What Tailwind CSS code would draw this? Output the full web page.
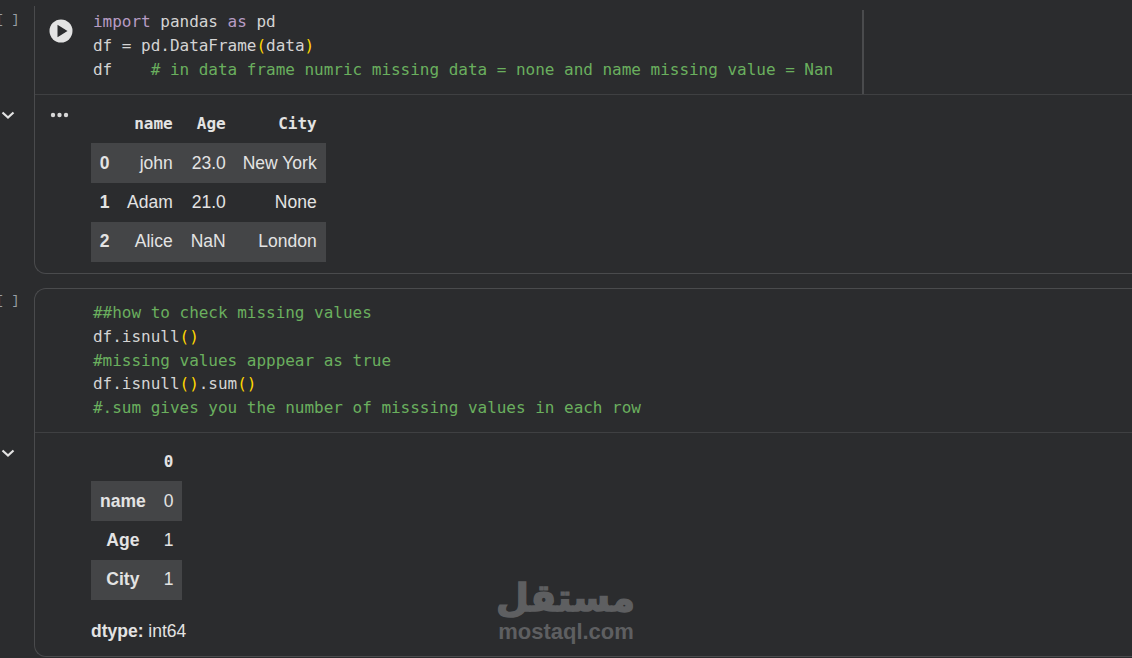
<!DOCTYPE html>
<html>
<head>
<meta charset="utf-8">
<script src="https://cdn.jsdelivr.net/npm/@tailwindcss/browser@4"></script>
</head>
<body class="bg-[#2b2c2e] overflow-hidden">
<div class="relative w-[1132px] h-[658px] overflow-hidden pt-[6px] text-[#e3e3e3] font-['Liberation_Sans',sans-serif]">

  <!-- first cell -->
  <div class="flex h-[268px]">
    <div class="w-[34px] shrink-0 flex flex-col">
      <div class="h-[88px] pt-[6px] ml-[-4px] font-['Liberation_Mono',monospace] text-[13px] leading-[16px] text-[#9aa0a6] whitespace-pre">[ ]</div>
      <svg class="ml-[1px] mt-[14px]" width="14" height="14" viewBox="0 0 14 14" fill="none" stroke="#e3e3e3" stroke-width="2.2"><path d="M1.5 4.5 7 9.5 12.5 4.5"/></svg>
    </div>
    <div class="flex-1 border-l border-b border-[#4a4b4d] rounded-bl-[12px] flex flex-col">
      <div class="h-[89px] border-b border-[#3f4042] flex">
        <div class="w-[58px] shrink-0 pt-[13px] pl-[14px]">
          <svg width="24" height="24" viewBox="0 0 24 24"><circle cx="12" cy="12" r="11.5" fill="#e3e3e3"/><path d="M8.5 5.8 18.5 12 8.5 18.2Z" fill="#2b2c2e"/></svg>
        </div>
        <div class="w-[771px] h-[84px] mt-[4px] border-r-2 border-[#4a4b4d] font-['DejaVu_Sans_Mono',monospace] text-[16px] leading-[24px] text-[#d4d4d4] whitespace-pre tracking-[-0.02px]"><div><span class="text-[#b79cc4]">import</span> pandas <span class="text-[#b79cc4]">as</span> pd</div><div>df = pd.DataFrame<span class="text-[#ffd700]">(</span>data<span class="text-[#ffd700]">)</span></div><div>df    <span class="text-[#6aaf5e]"># in data frame numric missing data = none and name missing value = Nan</span></div></div>
      </div>
      <div class="flex pt-[9px]">
        <div class="w-[56px] shrink-0 pl-[15px] pt-[1px]">
          <svg width="19" height="20" viewBox="0 0 19 20" fill="#d8d8d8"><circle cx="3" cy="10" r="2.2"/><circle cx="9.5" cy="10" r="2.2"/><circle cx="16" cy="10" r="2.2"/></svg>
        </div>
        <table class="text-[17.5px] leading-[21px] text-right border-collapse">
          <thead class="font-['DejaVu_Sans_Mono',monospace] text-[16px] font-bold">
            <tr class="h-[39px]"><th class="px-[8px] w-[27px]"></th><th class="px-[9px]">name</th><th class="px-[9px]">Age</th><th class="pl-[8px] pr-[9px]">City</th></tr>
          </thead>
          <tbody>
            <tr class="h-[40px] bg-[#444547]"><th class="px-[8px] text-center">0</th><td class="px-[9px]">john</td><td class="px-[9px]">23.0</td><td class="pl-[8px] pr-[9px]">New York</td></tr>
            <tr class="h-[39px]"><th class="px-[8px] text-center">1</th><td class="px-[9px]">Adam</td><td class="px-[9px]">21.0</td><td class="pl-[8px] pr-[9px]">None</td></tr>
            <tr class="h-[40px] bg-[#444547]"><th class="px-[8px] pb-[2px] text-center">2</th><td class="px-[9px] pb-[2px]">Alice</td><td class="px-[9px] pb-[2px]">NaN</td><td class="pl-[8px] pr-[9px] pb-[2px]">London</td></tr>
          </tbody>
        </table>
      </div>
    </div>
  </div>

  <!-- second cell -->
  <div class="flex h-[369px] mt-[14px]">
    <div class="w-[34px] shrink-0 flex flex-col">
      <div class="h-[145px] pt-[5px] ml-[-4px] font-['Liberation_Mono',monospace] text-[13px] leading-[16px] text-[#9aa0a6] whitespace-pre">[ ]</div>
      <svg class="ml-[1px] mt-[13px]" width="14" height="14" viewBox="0 0 14 14" fill="none" stroke="#e3e3e3" stroke-width="2.2"><path d="M1.5 4.5 7 9.5 12.5 4.5"/></svg>
    </div>
    <div class="flex-1 border border-r-0 border-[#4a4b4d] rounded-l-[12px] flex flex-col">
      <div class="h-[144px] border-b border-[#3f4042] pl-[58px] pt-[12px] font-['DejaVu_Sans_Mono',monospace] text-[16px] leading-[23.8px] text-[#d4d4d4] whitespace-pre tracking-[-0.02px]"><div class="text-[#6aaf5e]">##how to check missing values</div><div>df.isnull<span class="text-[#ffd700]">()</span></div><div class="text-[#6aaf5e]">#missing values apppear as true</div><div>df.isnull<span class="text-[#ffd700]">()</span>.sum<span class="text-[#ffd700]">()</span></div><div class="text-[#6aaf5e]">#.sum gives you the number of misssing values in each row</div></div>
      <div class="pl-[56px] pt-[9px]">
        <table class="text-[17.5px] leading-[21px] text-right border-collapse">
          <thead class="font-['DejaVu_Sans_Mono',monospace] text-[16px] font-bold">
            <tr class="h-[39px]"><th class="px-[9px] w-[63px]"></th><th class="px-[9px]">0</th></tr>
          </thead>
          <tbody>
            <tr class="h-[40px] bg-[#444547]"><th class="px-[9px] text-center">name</th><td class="px-[9px]">0</td></tr>
            <tr class="h-[39px]"><th class="px-[9px] text-center">Age</th><td class="px-[9px]">1</td></tr>
            <tr class="h-[40px] bg-[#444547]"><th class="px-[9px] pb-[2px] text-center">City</th><td class="px-[9px] pb-[2px]">1</td></tr>
          </tbody>
        </table>
        <p class="mt-[21px] text-[17.5px] leading-[21px]"><b>dtype:</b> int64</p>
      </div>
    </div>
  </div>

  <!-- watermark -->
  <div class="absolute left-[497px] top-[576px] w-[138px] text-center text-[#5e5f61] font-bold">
    <div dir="rtl" class="h-[43px] text-[38px] leading-[44px] font-['DejaVu_Sans',sans-serif] [-webkit-text-stroke:1.5px_#5e5f61]">مستقل</div>
    <div class="text-[22px] leading-[24px] mt-[1px] font-['Liberation_Sans',sans-serif]">mostaql.com</div>
  </div>
</div>
</body>
</html>
